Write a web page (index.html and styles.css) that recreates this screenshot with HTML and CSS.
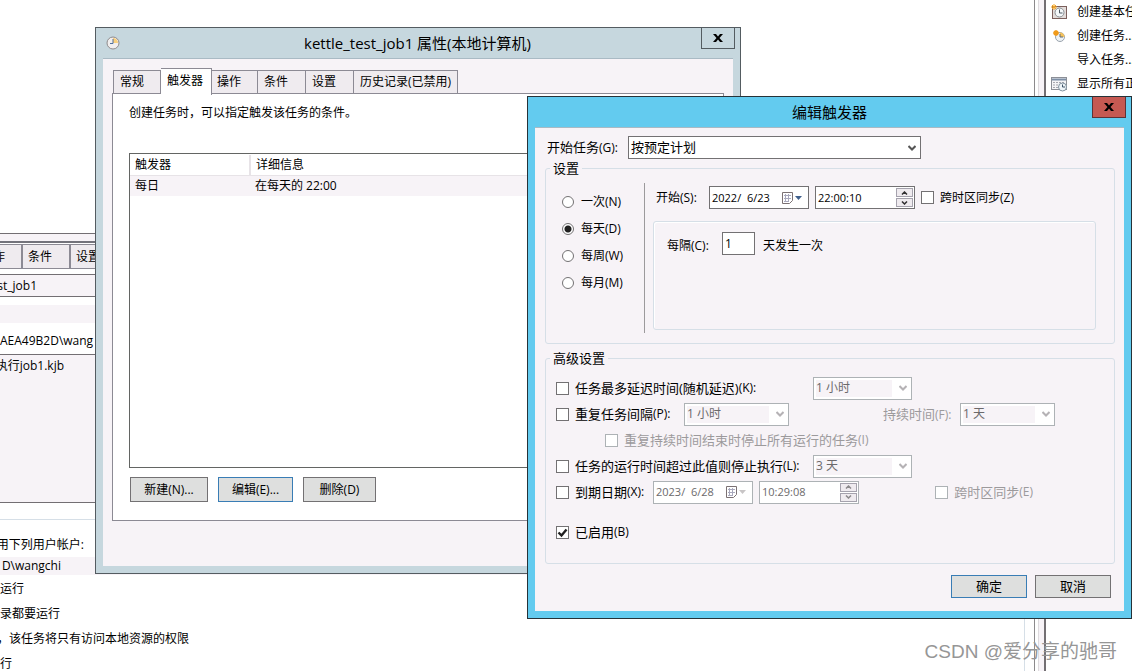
FILE: index.html
```html
<!DOCTYPE html>
<html lang="zh-CN">
<head>
<meta charset="utf-8">
<title>编辑触发器</title>
<link rel="stylesheet" href="styles.css">
</head>
<body>
<div class="desktop">
  <main class="details">
    <div class="details-strip"></div>
    <div class="back-tabs">
      <span class="back-tab back-tab-cut">作</span>
      <span class="back-tab">条件</span>
      <span class="back-tab">设置</span>
    </div>
    <div class="back-name"><span class="cut cut-name">st_job1</span></div>
    <div class="back-band"></div>
    <div class="back-author">AEA49B2D\wang</div>
    <div class="back-desc"><span class="cut cut-desc">执行job1.kjb</span></div>
    <section class="security">
      <p class="line"><span class="cut cut-user">用下列用户帐户:</span></p>
      <p class="line account"><span class="cut cut-account">D\wangchi</span></p>
      <p class="line"><span class="cut cut-run">运行</span></p>
      <p class="line"><span class="cut cut-any">录都要运行</span></p>
      <p class="line"><span class="cut cut-local">，该任务将只有访问本地资源的权限</span></p>
      <p class="line"><span class="cut cut-high">行</span></p>
    </section>
  </main>
  <div class="splitter"></div>
  <nav class="actions">
    <a class="action" href="#">
      <svg width="16" height="16" viewBox="0 0 16 16"><rect x="1.500" y="2.500" width="14" height="12" fill="#e3dcda" stroke="#7b5f5c"/><circle cx="8.500" cy="8.500" r="4.500" fill="#f4f8fa" stroke="#8a8f94"/><path d="M8.500 5.500v3.500h3" fill="none" stroke="#4d5963"/><path d="M3 0v6M0 3h6M1 1l4 4M5 1l-4 4" stroke="#f5a623"/></svg>
      创建基本任</a>
    <a class="action" href="#">
      <svg width="16" height="16" viewBox="0 0 16 16"><circle cx="9" cy="9" r="4.500" fill="#eef2f5" stroke="#9aa3ad"/><path d="M9 4.500a4.500 4.500 0 0 1 4.500 4.500H9z" fill="#f7c35a"/><path d="M9 6v3h3" fill="none" stroke="#5c6b7a"/><path d="M5 2v6M2 5h6M3 3l4 4M7 3L3 7" stroke="#f09a1a" stroke-width="1.500"/></svg>
      创建任务...</a>
    <a class="action" href="#"><span class="no-icon"></span>导入任务...</a>
    <a class="action" href="#">
      <svg width="16" height="16" viewBox="0 0 16 16"><rect x=".5" y="1.500" width="15" height="12" fill="#f4f4f6" stroke="#8c8f96"/><path d="M1 3.500h14" stroke="#7d8fa6" stroke-width="2"/><path d="M2 6.500h2m1 0h2m1 0h2m1 0h2M2 9h2m1 0h2M2 11.500h2m1 0h2" stroke="#a5a6ae"/><circle cx="11.500" cy="11" r="4" fill="#eef4f8" stroke="#8293a0"/><path d="M11.500 8.500V11H14" fill="none" stroke="#3f5468"/></svg>
      显示所有正</a>
  </nav>
  <div class="watermark">CSDN @爱分享的驰哥</div>

  <section class="window props">
    <header class="titlebar">
      <svg class="title-icon" width="14" height="14" viewBox="0 0 14 14"><circle cx="7" cy="7" r="6" fill="#f1eeee" stroke="#8f8b8c"/><path d="M7 2a5 5 0 0 1 5 5H7z" fill="#f8cf7c"/><path d="M7 3v4.500H4" fill="none" stroke="#4f6f9d"/></svg>
      <h1 class="title">kettle_test_job1 属性(本地计算机)</h1>
      <button class="close" type="button" aria-label="关闭"><svg width="10" height="8" viewBox="0 0 10 8"><path d="M0 0h3l2 2.500L7 0h3L6.500 4 10 8H7L5 5.500 3 8H0l3.500-4z"/></svg></button>
    </header>
    <div class="client props-client">
      <div class="tabs">
        <button class="tab tab-first" type="button">常规</button>
        <button class="tab tab-on" type="button">触发器</button>
        <button class="tab tab-next" type="button">操作</button>
        <button class="tab" type="button">条件</button>
        <button class="tab" type="button">设置</button>
        <button class="tab tab-last" type="button">历史记录(已禁用)</button>
      </div>
      <div class="panel">
        <p class="hint">创建任务时，可以指定触发该任务的条件。</p>
        <div class="list">
          <table class="triggers">
            <thead><tr><th class="col-name">触发器</th><th>详细信息</th></tr></thead>
            <tbody><tr><td>每日</td><td>在每天的 22:00</td></tr></tbody>
          </table>
        </div>
        <div class="panel-buttons">
          <button class="btn btn-new" type="button">新建(N)...</button>
          <button class="btn btn-edit btn-focus" type="button">编辑(E)...</button>
          <button class="btn btn-del" type="button">删除(D)</button>
        </div>
      </div>
    </div>
  </section>

  <section class="window edit">
    <header class="titlebar">
      <h2 class="title">编辑触发器</h2>
      <button class="close close-red" type="button" aria-label="关闭"><svg width="10" height="8" viewBox="0 0 10 8"><path d="M0 0h3l2 2.500L7 0h3L6.500 4 10 8H7L5 5.500 3 8H0l3.500-4z"/></svg></button>
    </header>
    <form class="client edit-client">
      <div class="begin">
        <label class="begin-label" for="begin">开始任务<span class="key">(G):</span></label>
        <select class="select begin-select" id="begin"><option>按预定计划</option></select>
      </div>
      <fieldset class="group">
        <legend>设置</legend>
        <div class="settings">
          <div class="radios">
            <label class="choice"><input class="radio" type="radio" name="freq">一次(N)</label>
            <label class="choice"><input class="radio" type="radio" name="freq" checked>每天(D)</label>
            <label class="choice"><input class="radio" type="radio" name="freq">每周(W)</label>
            <label class="choice"><input class="radio" type="radio" name="freq">每月(M)</label>
          </div>
          <div class="schedule">
            <div class="start">
              <label class="start-label" for="date">开始(S):</label>
              <div class="box">
                <input class="box-text" id="date" value="2022/  6/23">
                <button class="pick" type="button" aria-label="选择日期"><svg width="22" height="12" viewBox="0 0 22 12"><path d="M.5.500h10v8l-3 3h-7z" fill="#fff" stroke="#7b7173"/><path d="M2 3.500h7M2 6.500h7M2 9.500h5M3.500 2v8M6.500 2v8" stroke="#a9a9bd"/><path d="M13 4h7l-3.500 4z" fill="#3f5f8c"/></svg></button>
              </div>
              <div class="box">
                <input class="box-text" aria-label="开始时间" value="22:00:10">
                <span class="spin"><button class="spin-btn" type="button" aria-label="增加"><svg width="7" height="4" viewBox="0 0 7 4"><path d="M1 3.500l2.500-2.500L6 3.500"/></svg></button><button class="spin-btn" type="button" aria-label="减少"><svg width="7" height="4" viewBox="0 0 7 4"><path d="M1 .5L3.500 3 6 .5"/></svg></button></span>
              </div>
              <label class="choice sync"><input class="check" type="checkbox">跨时区同步(Z)</label>
            </div>
            <div class="every">
              <label class="every-label" for="days">每隔(C):</label>
              <input class="days" id="days" value="1">
              <span>天发生一次</span>
            </div>
          </div>
        </div>
      </fieldset>
      <fieldset class="group advanced">
        <legend>高级设置</legend>
        <div class="row">
          <label class="choice big wide"><input class="check" type="checkbox">任务最多延迟时间(随机延迟)<span class="key">(K):</span></label>
          <select class="select off delay" aria-label="延迟时间" disabled><option>1 小时</option></select>
        </div>
        <div class="row">
          <label class="choice big narrow"><input class="check" type="checkbox">重复任务间隔<span class="key">(P):</span></label>
          <select class="select off repeat" aria-label="重复间隔" disabled><option>1 小时</option></select>
          <label class="big dim duration-label" for="duration">持续时间<span class="key">(F):</span></label>
          <select class="select off duration" id="duration" disabled><option>1 天</option></select>
        </div>
        <div class="row">
          <label class="choice big dim indent"><input class="check" type="checkbox" disabled>重复持续时间结束时停止所有运行的任务<span class="key">(I)</span></label>
        </div>
        <div class="row">
          <label class="choice big wide"><input class="check" type="checkbox">任务的运行时间超过此值则停止执行<span class="key">(L):</span></label>
          <select class="select off delay" aria-label="停止时间" disabled><option>3 天</option></select>
        </div>
        <div class="row">
          <label class="choice big expiry"><input class="check" type="checkbox">到期日期<span class="key">(X):</span></label>
          <div class="box box-off">
            <input class="box-text" aria-label="到期日" value="2023/  6/28" disabled>
            <button class="pick" type="button" aria-label="选择日期" disabled><svg width="22" height="12" viewBox="0 0 22 12"><path d="M.5.500h10v8l-3 3h-7z" fill="#fff" stroke="#7b7173"/><path d="M2 3.500h7M2 6.500h7M2 9.500h5M3.500 2v8M6.500 2v8" stroke="#a9a9bd"/><path d="M13 4h7l-3.500 4z" fill="#c8c5c6"/></svg></button>
          </div>
          <div class="box box-off">
            <input class="box-text" aria-label="到期时间" value="10:29:08" disabled>
            <span class="spin"><button class="spin-btn" type="button" aria-label="增加" disabled><svg width="7" height="4" viewBox="0 0 7 4"><path d="M1 3.500l2.500-2.500L6 3.500"/></svg></button><button class="spin-btn" type="button" aria-label="减少" disabled><svg width="7" height="4" viewBox="0 0 7 4"><path d="M1 .5L3.500 3 6 .5"/></svg></button></span>
          </div>
          <label class="choice big dim expiry-sync"><input class="check" type="checkbox" disabled>跨时区同步<span class="key">(E)</span></label>
        </div>
        <div class="row row-enabled">
          <label class="choice big"><input class="check" type="checkbox" checked>已启用<span class="key">(B)</span></label>
        </div>
      </fieldset>
      <footer class="confirm">
        <button class="btn btn-ok btn-focus" type="button">确定</button>
        <button class="btn btn-ok" type="button">取消</button>
      </footer>
    </form>
  </section>
</div>
</body>
</html>
```
FILE: styles.css
```css
* { box-sizing: border-box; }
body, p, h1, h2 { margin: 0; }
body {
  background: #fff;
  color: #000;
  font: 12px/18px "Open Sans", "Noto Sans CJK SC", sans-serif;
}
button, input, select { font: inherit; color: inherit; margin: 0; padding: 0; border-radius: 0; }

.desktop { position: relative; display: flex; height: 100vh; overflow: hidden; white-space: nowrap; }

/* background: task details */
.details {
  flex: 1;
  min-width: 0;
  margin: 233px 9px 0 0;
  border-right: 1px solid #d6dfe7;
  overflow: hidden;
}
.details-strip { height: 10px; background: #f7f3f7; border-top: 1px solid #736f73; border-bottom: 2px solid #73737b; }
.back-tabs { display: flex; height: 25px; margin-top: 1px; border-top: 1px solid #8c8a94; border-bottom: 1px solid #8c8a94; }
.back-tab { width: 48px; padding: 3px 5px 2px; background: #efebef; border-right: 2px solid #8c8a94; }
.back-tab-cut { width: 23px; display: flex; justify-content: flex-end; padding-right: 16px; }
.back-name { margin-top: 5px; height: 23px; padding-top: 2px; background: #f7f3f7; border: 1px solid #736f73; border-width: 1px 0; }
.back-band { height: 18px; margin-top: 8px; background: #f7f3f7; }
.back-author { height: 31px; padding-top: 9px; }
.back-desc { height: 149px; padding-top: 2px; background: #f7f3f7; border: 1px solid #736f73; border-width: 1px 0; }
.security { margin-top: 16px; padding-top: 16px; border-top: 1px solid #d6dfe7; }
.line { margin-bottom: 7px; }
.line:first-child { margin-bottom: 3px; }
.account { background: #f7f3f7; margin-bottom: 5px; }
.cut { display: flex; justify-content: flex-end; }
.cut-name { width: 37px; }
.cut-desc { width: 64px; }
.cut-user { width: 84px; }
.cut-account { width: 61px; }
.cut-run { width: 24px; }
.cut-any { width: 60px; }
.cut-local { width: 189px; }
.cut-high { width: 12px; }

.splitter {
  width: 12px;
  background: #f7f3f7;
  border-left: 1px solid #8c8a8c;
  border-right: 2px solid #736f73;
  box-shadow: inset 3px 0 0 #fff, inset 4px 0 0 #dedbde;
}
.actions { width: 86px; overflow: hidden; display: flex; flex-direction: column; }
.action { display: flex; align-items: center; gap: 10px; height: 24px; padding-left: 5px; color: #000; text-decoration: none; }
.action svg, .no-icon { flex: none; width: 16px; }

.watermark {
  position: absolute;
  right: 15px;
  bottom: 5px;
  color: #969696;
  font: 19px/28px "Liberation Sans", "Noto Sans CJK SC", sans-serif;
}

/* windows */
.window { position: absolute; display: flex; flex-direction: column; padding: 0 7px 7px; }
.props { left: 95px; top: 27px; width: 646px; height: 547px; background: #c6d7de; border: 1px solid #545c61; }
.edit { left: 527px; right: 0; top: 96px; background: #63cbef; border: 1px solid #263238; }
.titlebar { display: flex; height: 30px; align-items: center; }
.title { flex: 1; text-align: center; font-weight: 400; font-size: 15px; line-height: 20px; }
.props .title { padding-left: 14px; }
.edit .title { padding-left: 32px; }
.title-icon { margin-left: 3px; }
.close {
  display: flex;
  align-self: flex-start;
  align-items: center;
  justify-content: center;
  width: 34px;
  height: 21px;
  margin-right: -2px;
  background: transparent;
  border: 1px solid #545c61;
  border-top: 0;
}
.close-red { background: #c65952; border-color: #5f3236; }
.client { flex: 1; background: #f7f3f7; border-top: 1px solid #a9bac4; }

.props-client { display: flex; flex-direction: column; padding: 9px 9px 45px; }
.tabs { display: flex; align-items: flex-end; padding-left: 1px; height: 25px; }
.tab { height: 23px; padding: 0 13px 0 6px; background: #efebef; border: 1px solid #8c8a94; border-left-width: 0; border-bottom: 0; min-width: 48px; text-align: left; }
.tab-first { border-left-width: 1px; }
.tab-next { min-width: 46px; padding: 0 5px; }
.tab-on { position: relative; height: 27px; min-width: 51px; margin-bottom: -2px; padding: 0 6px 3px; background: #fff; z-index: 1; }
.tab-last { padding: 0 6px; }
.panel { flex: 1; display: flex; flex-direction: column; padding: 10px 16px 18px; background: #fff; border: 1px solid #8c8a94; }
.list { flex: 1; margin-top: 31px; padding-top: 1px; border: 1px solid #636563; }
.triggers { width: 100%; border-collapse: collapse; }
.triggers th, .triggers td { padding: 1px 5px; text-align: left; font-weight: 400; }
.triggers th { border-bottom: 1px solid #e7e3e7; }
.triggers .col-name { width: 120px; border-right: 2px solid #e7e3e7; }
.triggers td { background: #f7f3f7; }
.panel-buttons { display: flex; gap: 10px; margin-top: 9px; }
.btn { height: 25px; background: #dedfde; border: 1px solid #737173; }
.btn-focus { border-color: #397db5; }
.btn-new { width: 78px; margin-left: 1px; }
.btn-edit { width: 75px; }
.btn-del { width: 73px; }

/* edit dialog */
.edit-client { padding: 8px 9px 13px 10px; }
.begin { display: flex; align-items: center; margin-left: 2px; font-size: 13px; }
.begin-label { width: 81px; }
.key { font-size: 12px; }
.select {
  appearance: none;
  height: 23px;
  padding: 0 20px 2px 2px;
  border: 1px solid #737173;
  background: #fff url("data:image/svg+xml,%3Csvg xmlns='http://www.w3.org/2000/svg' width='8' height='6'%3E%3Cpath d='M.5 1l3.500 3.500L7.500 1' fill='none' stroke='%23555' stroke-width='2'/%3E%3C/svg%3E") no-repeat right 4px center;
}
.begin-select { width: 293px; }
.off {
  opacity: 1;
  padding-bottom: 0;
  color: #6b696b;
  border-color: #adb2b5;
  background:
    url("data:image/svg+xml,%3Csvg xmlns='http://www.w3.org/2000/svg' width='8' height='6'%3E%3Cpath d='M.5 1l3.500 3.500L7.500 1' fill='none' stroke='%23b5b2b5' stroke-width='2'/%3E%3C/svg%3E") no-repeat right 4px center,
    linear-gradient(#f7f3f7, #f7f3f7) no-repeat 2px 2px / calc(100% - 21px) calc(100% - 4px),
    #fff;
}
.group { min-width: 0; margin: 0; padding: 0 10px; border: 1px solid #d6dfe7; border-radius: 3px; }
.group legend { margin-left: -6px; padding: 0 3px; font-size: 13px; line-height: 18px; }
.settings { display: flex; gap: 8px; padding: 6px 8px 10px 6px; }
.radios { width: 83px; height: 150px; padding-top: 5px; border-right: 1px solid #9c9a9c; }
.choice { display: flex; align-items: center; }
.radios .choice { height: 27px; gap: 7px; }
.radio, .check { appearance: none; flex: none; width: 13px; height: 13px; border: 1px solid #737173; background: #fff; }
.radio { width: 12px; height: 12px; border-radius: 50%; }
.radio:checked { background: radial-gradient(circle, #212021 0 3px, #fff 4px); }
.check:disabled { border-color: #adb2b5; }
.check:checked { background: #fff url("data:image/svg+xml,%3Csvg xmlns='http://www.w3.org/2000/svg' width='11' height='11'%3E%3Cpath d='M1.500 5.500l3 3L9.500 2.500' fill='none' stroke='%23212021' stroke-width='2.400'/%3E%3C/svg%3E") no-repeat center; }
.schedule { flex: 1; display: flex; flex-direction: column; margin: 3px 0; }
.start { display: flex; align-items: center; gap: 6px; }
.start-label { width: 47px; margin-left: 3px; }
.box { display: flex; align-items: center; width: 100px; height: 23px; padding: 1px; background: #fff; border: 1px solid #737173; }
.box-text { flex: 1; min-width: 0; border: 0; background: transparent; font-size: 11px; white-space: pre; padding-left: 1px; }
.box-off { border-color: #adb2b5; color: #6b696b; }
.pick { display: flex; border: 0; background: transparent; padding-right: 3px; }
.spin { display: flex; flex-direction: column; gap: 1px; }
.spin-btn { display: flex; align-items: center; justify-content: center; width: 17px; height: 9px; background: #efebef; border: 1px solid #a5a2ad; }
.spin-btn path { fill: none; stroke: #313031; stroke-width: 1.500; }
.box-off .spin-btn path { stroke: #8c8a8c; }
.sync { gap: 6px; }
.every { flex: 1; display: flex; align-items: flex-start; gap: 8px; margin-top: 12px; padding: 10px 13px; border: 1px solid #d6dfe7; border-radius: 3px; box-shadow: inset 1px 1px 0 #fff; line-height: 28px; }
.every-label { width: 47px; }
.days { width: 33px; height: 23px; padding: 0 2px; border: 1px solid #737173; background: #fff; }
.advanced { margin-top: 5px; padding-bottom: 18px; }
.big { font-size: 13px; }
.big .check { margin-right: 6px; }
.dim { color: #9c9a9c; }
.row { display: flex; align-items: center; height: 26px; }
.advanced legend + .row { margin-top: 8px; }
.wide { width: 257px; }
.narrow { width: 128px; }
.indent { margin-left: 49px; }
.expiry { width: 97px; }
.expiry + .box { margin-right: 6px; }
.delay { width: 99px; }
.repeat { width: 105px; }
.duration-label { margin-left: auto; width: 77px; }
.duration { width: 95px; margin-right: 49px; }
.expiry-sync { margin-left: auto; margin-right: 71px; }
.row-enabled { margin-top: 14px; }
.confirm { display: flex; justify-content: flex-end; gap: 8px; margin-top: 11px; padding-right: 4px; }
.btn-ok { width: 76px; height: 23px; padding-bottom: 1px; font-size: 13px; }
```
